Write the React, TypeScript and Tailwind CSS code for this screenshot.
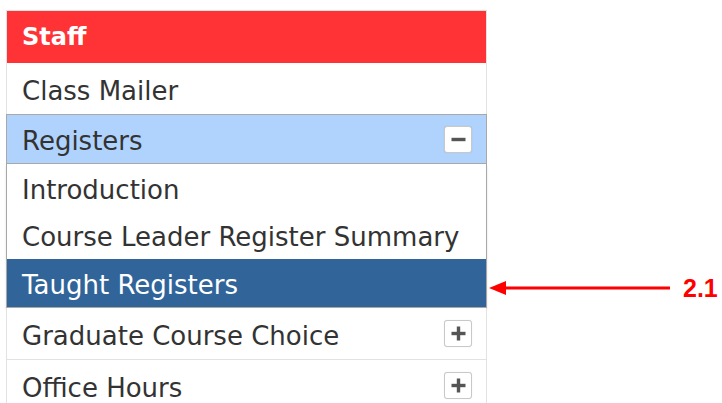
import React from "react";

function ToggleBox({ open }: { open: boolean }) {
  return (
    <span className="flex h-[27px] w-[28px] shrink-0 items-center justify-center rounded-[3px] border border-[#c8c8c8] bg-white shadow-[0_0_1px_rgba(0,0,0,0.15)]">
      <svg width="17" height="17" viewBox="0 0 17 17">
        <path d="M1.5 8.5h14" stroke="#555" strokeWidth="3.4" strokeLinecap="butt" />
        {!open && <path d="M8.5 1.5v14" stroke="#555" strokeWidth="3.4" strokeLinecap="butt" />}
      </svg>
    </span>
  );
}

export default function App() {
  return (
    <div
      className="flex h-[403px] w-[722px] items-start overflow-hidden bg-white pl-[6px] pt-[10px]"
      style={{ fontFamily: '"DejaVu Sans", Verdana, sans-serif' }}
    >
      <nav className="flex w-[481px] shrink-0 flex-col text-[26px] leading-none text-[#333]">
        <div className="flex h-[53px] shrink-0 items-center border border-b-0 border-[#e2e2e2] bg-[#ff3235] pl-[15px] text-[24px] font-bold text-white">
          Staff
        </div>
        <div className="flex h-[51px] shrink-0 items-center border-x border-[#e2e2e2] bg-white pl-[15px] pt-[4px]">
          Class Mailer
        </div>
        <div className="flex h-[50px] shrink-0 items-center justify-between border border-[#a8a8a8] bg-[#b0d3fe] pl-[15px] pr-[14px]">
          <span className="pt-[4px]">Registers</span>
          <ToggleBox open />
        </div>
        <div className="flex shrink-0 flex-col border-x border-b border-[#a8a8a8] shadow-[0_2px_2px_rgba(0,0,0,0.12)]">
          <div className="flex h-[47px] items-center bg-white pl-[15px] pt-[4px]">Introduction</div>
          <div className="flex h-[48px] items-center bg-white pl-[15px] pt-[4px]">Course Leader Register Summary</div>
          <div className="flex h-[48px] items-center bg-[#31659a] pl-[15px] pt-[4px] text-white">Taught Registers</div>
        </div>
        <div className="flex h-[52px] shrink-0 items-center justify-between border-x border-b border-[#e2e2e2] bg-white pl-[15px] pr-[14px]">
          <span className="pt-[4px]">Graduate Course Choice</span>
          <ToggleBox open={false} />
        </div>
        <div className="flex h-[52px] shrink-0 items-center justify-between border-x border-b border-[#e2e2e2] bg-white pl-[15px] pr-[14px]">
          <span className="pt-[4px]">Office Hours</span>
          <ToggleBox open={false} />
        </div>
      </nav>

      <div className="mt-[264px] flex h-[28px] items-center">
        <svg width="186" height="16" viewBox="0 0 186 16" className="ml-[2px]">
          <path d="M0 8 L17 1 L17 15 Z" fill="#ff0000" />
          <path d="M15 8 H181" stroke="#ff0000" strokeWidth="3" />
        </svg>
        <span
          className="ml-[8px] text-[25px] font-bold leading-none text-[#ff0000]"
          style={{ fontFamily: '"Liberation Sans", Arial, sans-serif' }}
        >
          2.1
        </span>
      </div>
    </div>
  );
}
